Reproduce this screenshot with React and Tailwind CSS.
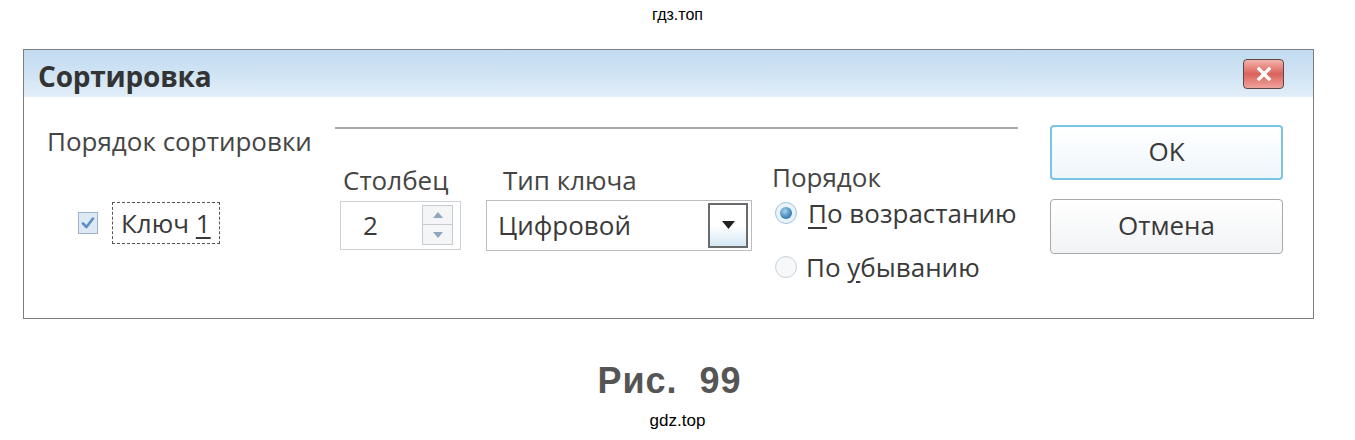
import React from 'react';

const ui = { fontFamily: '"Open Sans", "Noto Sans", sans-serif' };
const arial = { fontFamily: '"Liberation Sans", Arial, sans-serif' };

const CheckMark = () => (
	<svg width="14" height="14" viewBox="0 0 14 14">
		<path d="M2 7.5 L5.5 11 L12 2.5" fill="none" stroke="#5f8fc0" strokeWidth="2.6" strokeLinecap="round" strokeLinejoin="round" />
	</svg>
);

const Radio = ({ checked }) => (
	<span
		className={
			checked
				? 'flex h-[22px] w-[22px] shrink-0 items-center justify-center rounded-full border border-[#9fc3dd] bg-[#eaf3fa]'
				: 'flex h-[22px] w-[22px] shrink-0 items-center justify-center rounded-full border border-[#c9d2da] bg-[#f6f8fa]'
		}
	>
		{checked ? (
			<span className="h-[12px] w-[12px] rounded-full bg-[radial-gradient(circle_at_40%_35%,#a9d4ee,#3f86b8_60%,#2f6f9e)]" />
		) : null}
	</span>
);

const App = () => {
	return (
		<div className="relative h-[440px] w-[1355px] overflow-hidden bg-white text-[#3f3f3f]">
			<div className="h-[49px] pt-[5px] text-center text-[16px] leading-[20px] text-black" style={arial}>
				гдз.топ
			</div>

			<div className="ml-[23px] w-[1291px] border-[1.5px] border-[#7d7d7d] bg-white" style={ui}>
				<div className="flex h-[47px] items-center justify-between bg-gradient-to-b from-[#c2dbf0] via-[#cfe3f4] to-[#e2eef9] pl-[14px] pr-[29px]">
					<span className="pt-[5px] text-[28px] font-bold leading-none tracking-[-0.2px] text-[#333]">Сортировка</span>
					<span className="flex h-[30px] w-[41px] items-center justify-center rounded-[4px] border border-[#5e4545] bg-gradient-to-b from-[#f2b3ad] via-[#d9625c] to-[#eea39d]">
						<svg width="16" height="14" viewBox="0 0 16 14">
							<path d="M3 2 L13 12 M13 2 L3 12" stroke="#fff" strokeWidth="3.4" strokeLinecap="square" />
						</svg>
					</span>
				</div>

				<div className="flex h-[221px] text-[26px] leading-[32px]">
					<div className="w-[311px] pl-[23px] pt-[28px]">
						<div className="whitespace-nowrap text-[#454545]">Порядок сортировки</div>
						<div className="mt-[45px] flex items-center pl-[31px]">
							<span className="flex h-[22px] w-[20px] items-center justify-center border border-[#9fb4c8] bg-[#dde9f4]">
								<CheckMark />
							</span>
							<span className="ml-[14px] flex h-[42px] items-center border-[1.5px] border-dashed border-[#555] px-[8px] text-[#3a3a3a]">
								Ключ&nbsp;<span className="underline underline-offset-4">1</span>
							</span>
						</div>
					</div>

					<div className="w-[683px] pt-[30px]">
						<div className="h-[1.5px] bg-[#a8a8a8]" />
						<div className="flex pt-[35px]">
							<div className="ml-[5px]">
								<div className="pl-[3px] text-[#454545]">Столбец</div>
								<div className="mt-[5px] flex h-[49px] w-[121px] items-center justify-between border border-[#cfd3d6] pl-[22px] pr-[7px] text-[#3a3a3a]">
									<span>2</span>
									<span className="flex flex-col">
										<span className="flex h-[20px] w-[31px] items-center justify-center border border-[#c7ccd2] bg-[#f3f5f7]">
											<svg width="10" height="6" viewBox="0 0 10 6"><path d="M5 0 L10 6 L0 6 Z" fill="#8fa6bc" /></svg>
										</span>
										<span className="flex h-[20px] w-[31px] items-center justify-center border border-t-0 border-[#c7ccd2] bg-[#f3f5f7]">
											<svg width="10" height="6" viewBox="0 0 10 6"><path d="M0 0 L10 0 L5 6 Z" fill="#8fa6bc" /></svg>
										</span>
									</span>
								</div>
							</div>

							<div className="ml-[25px]">
								<div className="pl-[17px] text-[#454545]">Тип ключа</div>
								<div className="mt-[4px] flex h-[51px] w-[266px] items-center justify-between border border-[#b9bdc1] pl-[11px] pr-[3px] text-[#3a3a3a]">
									<span>Цифровой</span>
									<span className="flex h-[45px] w-[40px] items-center justify-center border-[2px] border-[#6a6a6a] bg-gradient-to-b from-white via-white to-[#d6e8f5]">
										<svg width="13" height="8" viewBox="0 0 13 8"><path d="M0 0 L13 0 L6.5 8 Z" fill="#222" /></svg>
									</span>
								</div>
							</div>

							<div className="ml-[20px] -mt-[3px]">
								<div className="text-[#454545]">Порядок</div>
								<div className="mt-[4px] flex items-center whitespace-nowrap pl-[3px] text-[#3a3a3a]">
									<Radio checked />
									<span className="ml-[11px]">
										<span className="underline underline-offset-4">П</span>о возрастанию
									</span>
								</div>
								<div className="mt-[22px] flex items-center whitespace-nowrap pl-[3px] text-[#3a3a3a]">
									<Radio />
									<span className="ml-[9px]">
										По <span className="underline underline-offset-4">у</span>быванию
									</span>
								</div>
							</div>
						</div>
					</div>

					<div className="ml-[32px] flex flex-col pt-[28px]">
						<div className="flex h-[55px] w-[233px] items-center justify-center rounded-[4px] border-[2px] border-[#7cc4e6] bg-gradient-to-b from-white to-[#eef6fb] pb-[3px] text-[#3a3a3a]">
							OK
						</div>
						<div className="mt-[19px] flex h-[55px] w-[233px] items-center justify-center rounded-[4px] border-[1.5px] border-[#a9a9a9] bg-gradient-to-b from-white to-[#f1f3f5] pb-[3px] text-[#3a3a3a]">
							Отмена
						</div>
					</div>
				</div>
			</div>

			<div className="mt-[42px] pr-[16px] text-center text-[36px] font-bold leading-[40px] tracking-[1px] text-[#555]" style={arial}>
				Рис.&nbsp; 99
			</div>
			<div className="mt-[10px] text-center text-[17px] leading-[20px] text-black" style={arial}>
				gdz.top
			</div>
		</div>
	);
};

export default App;
